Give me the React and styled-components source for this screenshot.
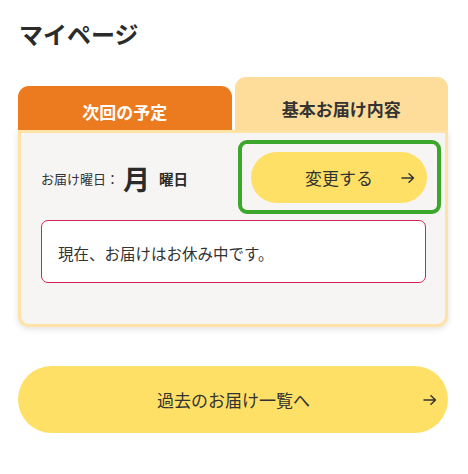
import React from "react";
import styled, { createGlobalStyle } from "styled-components";

const GlobalStyle = createGlobalStyle`
  body {
    margin: 0;
    background: #fff;
    font-family: "Noto Sans CJK JP", "Noto Sans", sans-serif;
    color: #333;
  }
`;

const Arrow = () => (
  <svg width="14" height="12" viewBox="0 0 14 12" fill="none">
    <path
      d="M1 6h11.5M8 1.8 12.5 6 8 10.2"
      stroke="#333"
      strokeWidth="1.5"
      strokeLinecap="round"
      strokeLinejoin="round"
    />
  </svg>
);

const App = () => {
  return (
    <Page>
      <GlobalStyle />
      <Title>マイページ</Title>
      <Tabs>
        <Tab $height={44} $bottom={6} $bg="#ec7a1e" $color="#fff">
          次回の予定
        </Tab>
        <Tab $height={53} $bottom={9} $bg="#fedd9b" $color="#333">
          基本お届け内容
        </Tab>
      </Tabs>
      <Panel>
        <Row>
          <DayInfo>
            <DayLabel>お届け曜日：</DayLabel>
            <DayValue>月</DayValue>
            <DaySuffix>曜日</DaySuffix>
          </DayInfo>
          <Highlight>
            <PillButton $height={51}>
              <span>変更する</span>
              <Arrow />
            </PillButton>
          </Highlight>
        </Row>
        <Notice>現在、お届けはお休み中です。</Notice>
      </Panel>
      <HistoryButton>
        <span>過去のお届け一覧へ</span>
        <Arrow />
      </HistoryButton>
    </Page>
  );
};

const Page = styled.div`
  padding: 17px 20px 40px 18px;
`;

const Title = styled.h1`
  margin: 0 0 0 1px;
  font-size: 24px;
  line-height: 34px;
  font-weight: 700;
  color: #2b2b2b;
`;

const Tabs = styled.div`
  display: grid;
  grid-template-columns: 1fr 1fr;
  column-gap: 3px;
  align-items: end;
  margin-top: 26px;
`;

const Tab = styled.div`
  height: ${(p) => p.$height}px;
  box-sizing: border-box;
  display: flex;
  align-items: flex-end;
  justify-content: center;
  padding-bottom: ${(p) => p.$bottom}px;
  background: ${(p) => p.$bg};
  color: ${(p) => p.$color};
  border-radius: 11px 11px 0 0;
  font-size: 17px;
  font-weight: 700;
  line-height: 24px;
`;

const Panel = styled.div`
  background: #f7f5f3;
  border: 3px solid #ffe3a6;
  border-radius: 0 0 11px 11px;
  padding: 7px 4px 41px 20px;
  box-shadow: 0 2px 6px rgba(0, 0, 0, 0.12);
`;

const Row = styled.div`
  display: flex;
  align-items: center;
  justify-content: space-between;
`;

const DayInfo = styled.div`
  display: flex;
  align-items: center;
  padding-top: 2px;
`;

const DayLabel = styled.span`
  font-size: 13px;
  color: #333;
`;

const DayValue = styled.span`
  font-size: 27px;
  font-weight: 700;
  line-height: 1;
  margin-left: 4px;
  color: #2b2b2b;
`;

const DaySuffix = styled.span`
  font-size: 14.5px;
  font-weight: 700;
  margin-left: 9px;
  color: #2b2b2b;
`;

const Highlight = styled.div`
  border: 4px solid #3ca82b;
  border-radius: 9px;
  padding: 8px 10px 7px 9px;
`;

const PillButton = styled.div`
  width: 176px;
  height: ${(p) => p.$height}px;
  box-sizing: border-box;
  background: #ffe066;
  border-radius: 999px;
  display: grid;
  grid-template-columns: 1fr auto 1fr;
  align-items: center;
  padding: 0 12px;
  font-size: 17px;
  color: #333;
  &::before {
    content: "";
  }
  svg {
    justify-self: end;
  }
`;

const Notice = styled.div`
  margin: 6px 15px 0 0;
  height: 63px;
  box-sizing: border-box;
  background: #fff;
  border: 1.5px solid #d0225b;
  border-radius: 7px;
  display: flex;
  align-items: center;
  padding: 2px 0 0 16px;
  font-size: 15.5px;
  color: #333;
`;

const HistoryButton = styled(PillButton)`
  width: auto;
  height: 67px;
  margin-top: 39px;
  padding: 0 11px 0 12px;
`;

export default App;
